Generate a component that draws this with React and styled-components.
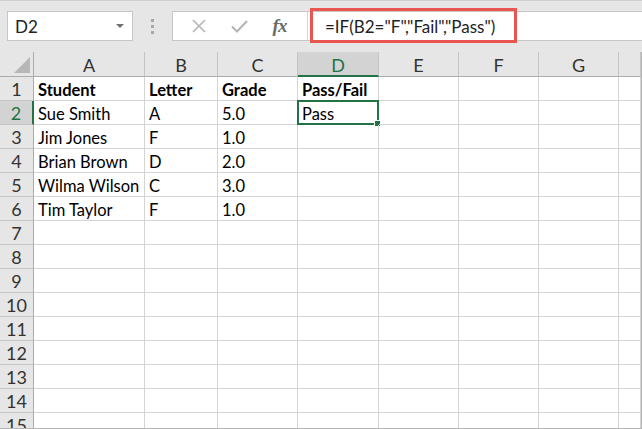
import React from 'react';
import styled, { createGlobalStyle } from 'styled-components';

const Global = createGlobalStyle`
  html, body { margin: 0; padding: 0; background: #e6e6e6; overflow: hidden; }
  body { font-family: Lato, "Liberation Sans", sans-serif; }
`;

const COLS = [
  { key: 'A', w: 111 },
  { key: 'B', w: 73 },
  { key: 'C', w: 80 },
  { key: 'D', w: 81 },
  { key: 'E', w: 80 },
  { key: 'F', w: 80 },
  { key: 'G', w: 80 },
  { key: '', w: 22 },
];

const DATA = [
  ['Student', 'Letter', 'Grade', 'Pass/Fail'],
  ['Sue Smith', 'A', '5.0', 'Pass'],
  ['Jim Jones', 'F', '1.0'],
  ['Brian Brown', 'D', '2.0'],
  ['Wilma Wilson', 'C', '3.0'],
  ['Tim Taylor', 'F', '1.0'],
];

const ROWS = 15;
const template = `34px ${COLS.map((c) => c.w + 'px').join(' ')}`;

const Window = styled.div`
  width: 642px;
  height: 429px;
  box-sizing: border-box;
  border-top: 1px solid #cfcfcf;
  display: flex;
  flex-direction: column;
  overflow: hidden;
`;

const Toolbar = styled.div`
  height: 51px;
  flex: none;
  display: flex;
  align-items: flex-start;
  padding-top: 10px;
  box-sizing: border-box;
`;

const NameBox = styled.div`
  margin-left: 7px;
  width: 126px;
  height: 30px;
  box-sizing: border-box;
  background: #fff;
  border: 1px solid #c6c6c6;
  display: flex;
  align-items: center;
  justify-content: space-between;
  padding: 0 8px 0 7px;
  font-size: 17px;
  color: #222;
`;

const Caret = styled.span`
  width: 0;
  height: 0;
  border-left: 4px solid transparent;
  border-right: 4px solid transparent;
  border-top: 4px solid #6f6f6f;
`;

const Grip = styled.div`
  width: 39px;
  height: 30px;
  display: flex;
  flex-direction: column;
  align-items: center;
  justify-content: center;
  gap: 3px;
  span {
    width: 3px;
    height: 3px;
    background: #a8a8a8;
  }
`;

const FormulaBox = styled.div`
  flex: 1;
  height: 30px;
  box-sizing: border-box;
  background: #fff;
  border: 1px solid #c6c6c6;
  border-right: none;
  display: flex;
  align-items: center;
`;

const Icons = styled.div`
  width: 135px;
  height: 100%;
  box-sizing: border-box;
  border-right: 1px solid #d6d6d6;
  display: flex;
  align-items: center;
  justify-content: space-around;
  padding: 0 8px 0 6px;
`;

const Fx = styled.span`
  font-family: "Liberation Serif", serif;
  font-style: italic;
  font-weight: 700;
  font-size: 19px;
  color: #6a6a6a;
  letter-spacing: -1px;
`;

const Formula = styled.div`
  position: relative;
  margin-left: 2px;
  height: 100%;
  display: flex;
  align-items: center;
  padding-left: 15px;
  font-size: 17px;
  color: #222;
  &::after {
    content: '';
    position: absolute;
    left: 0;
    top: -4px;
    width: 207px;
    height: 35px;
    box-sizing: border-box;
    border: 3px solid #e8564f;
  }
`;

const Sheet = styled.div`
  flex: 1;
  display: grid;
  grid-template-columns: ${template};
  grid-auto-rows: 24px;
  grid-template-rows: 25px;
  align-content: start;
  overflow: hidden;
  border-right: 1px solid #b4b4b4;
  border-bottom: 1px solid #b4b4b4;
  background: #fff;
`;

const Corner = styled.div`
  background: #e6e6e6;
  border-right: 1px solid #ababab;
  border-bottom: 1px solid #ababab;
  position: relative;
  &::after {
    content: '';
    position: absolute;
    right: 3px;
    bottom: 3px;
    border-left: 16px solid transparent;
    border-bottom: 16px solid #b7b7b7;
  }
`;

const ColHead = styled.div`
  background: ${(p) => (p.$active ? '#d3d3d3' : '#e6e6e6')};
  border-right: 1px solid #c4c4c4;
  border-bottom: ${(p) => (p.$active ? '2px solid #217346' : '1px solid #ababab')};
  box-sizing: border-box;
  display: flex;
  align-items: center;
  justify-content: center;
  font-size: 18px;
  color: ${(p) => (p.$active ? '#217346' : '#333')};
  padding-top: 2px;
`;

const RowHead = styled.div`
  background: ${(p) => (p.$active ? '#d3d3d3' : '#e6e6e6')};
  border-right: ${(p) => (p.$active ? '2px solid #217346' : '1px solid #ababab')};
  border-bottom: 1px solid #c4c4c4;
  box-sizing: border-box;
  display: flex;
  align-items: center;
  justify-content: center;
  font-size: 18px;
  padding-top: 1px;
  color: ${(p) => (p.$active ? '#217346' : '#333')};
`;

const Cell = styled.div`
  position: relative;
  border-right: 1px solid #d4d4d4;
  border-bottom: 1px solid #d4d4d4;
  box-sizing: border-box;
  display: flex;
  align-items: center;
  padding: 2px 0 0 4px;
  font-size: 16.5px;
  font-weight: ${(p) => (p.$bold ? 700 : 400)};
  color: #000;
  white-space: nowrap;
`;

const Selection = styled.div`
  position: absolute;
  left: -1px;
  top: -1px;
  right: -1px;
  bottom: -1px;
  border: 2px solid #217346;
  &::after {
    content: '';
    position: absolute;
    right: -4px;
    bottom: -4px;
    width: 5px;
    height: 5px;
    background: #217346;
    border: 1px solid #fff;
  }
`;

const Cross = () => (
  <svg width="14" height="14" viewBox="0 0 14 14">
    <path d="M1 1L13 13M13 1L1 13" stroke="#b4b4b4" strokeWidth="1.6" fill="none" />
  </svg>
);

const Check = () => (
  <svg width="17" height="13" viewBox="0 0 17 13">
    <path d="M1 6.5L6 11.5L16 1" stroke="#b4b4b4" strokeWidth="2" fill="none" />
  </svg>
);

export default function App() {
  const rows = [];
  for (let r = 1; r <= ROWS; r++) {
    const vals = DATA[r - 1] || [];
    rows.push(
      <RowHead key={'h' + r} $active={r === 2}>{r}</RowHead>
    );
    COLS.forEach((c, i) => (
      rows.push(
        <Cell key={r + c.key + i} $bold={r === 1}>
          {vals[i]}
          {r === 2 && c.key === 'D' && <Selection />}
        </Cell>
      )
    ));
  }

  return (
    <Window>
      <Global />
      <Toolbar>
        <NameBox>
          D2
          <Caret />
        </NameBox>
        <Grip>
          <span />
          <span />
          <span />
        </Grip>
        <FormulaBox>
          <Icons>
            <Cross />
            <Check />
            <Fx>fx</Fx>
          </Icons>
          <Formula>=IF(B2="F","Fail","Pass")</Formula>
        </FormulaBox>
      </Toolbar>
      <Sheet>
        <Corner />
        {COLS.map((c, i) => (
          <ColHead key={'c' + i} $active={c.key === 'D'}>{c.key}</ColHead>
        ))}
        {rows}
      </Sheet>
    </Window>
  );
}
